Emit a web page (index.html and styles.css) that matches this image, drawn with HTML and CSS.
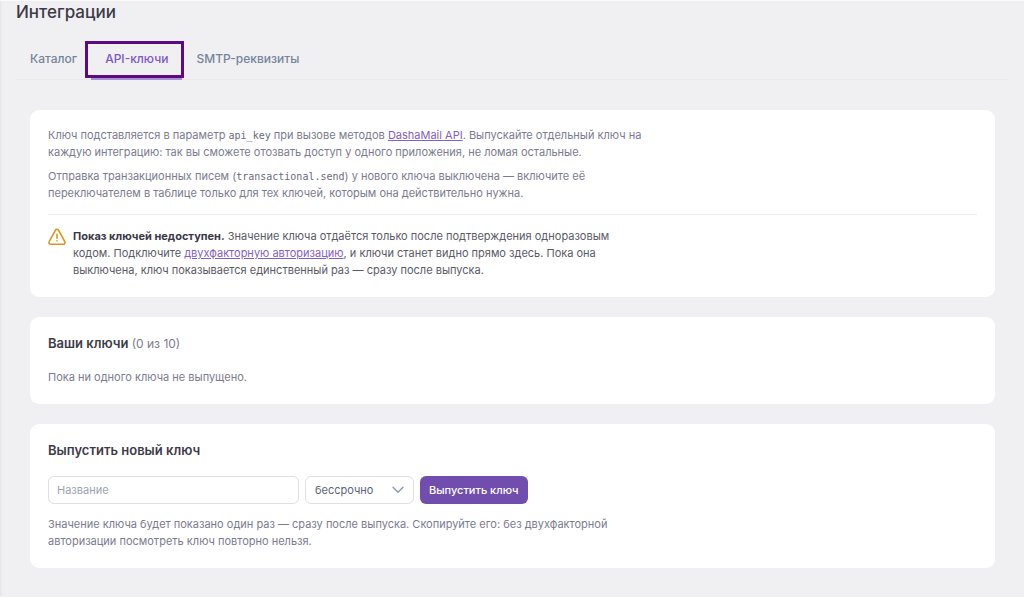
FILE: index.html
```html
<!DOCTYPE html>
<html lang="ru">
<head>
    <meta charset="UTF-8">
    <meta name="viewport" content="width=device-width, initial-scale=1.0">
    <title>Интеграции</title>
    <link rel="stylesheet" href="styles.css">
</head>
<body>
    <main class="page">
        <h1>Интеграции</h1>

        <nav class="tabs">
            <a class="tab" href="#catalog">Каталог</a>
            <a class="tab active" href="#api">API-ключи</a>
            <a class="tab" href="#smtp">SMTP-реквизиты</a>
        </nav>

        <div class="cards">
            <section class="card">
                <div class="intro">
                    <p>Ключ подставляется в параметр <code>api_key</code> при вызове методов <a href="#docs">DashaMail API</a>. Выпускайте отдельный ключ на каждую интеграцию: так вы сможете отозвать доступ у одного приложения, не ломая остальные.</p>
                    <p>Отправка транзакционных писем (<code>transactional.send</code>) у нового ключа выключена — включите её переключателем в таблице только для тех ключей, которым она действительно нужна.</p>
                </div>
                <div class="notice">
                    <svg class="notice-icon" viewBox="0 0 18 18" fill="none" stroke="#d9951f" stroke-width="1.6" stroke-linecap="round" stroke-linejoin="round">
                        <path d="M7.5 2.1 1.2 13.6a1.7 1.7 0 0 0 1.5 2.6h12.6a1.7 1.7 0 0 0 1.5-2.6L10.5 2.1a1.7 1.7 0 0 0-3 0z"/>
                        <path d="M9 6.2v4M9 12.9v.1"/>
                    </svg>
                    <p><strong>Показ ключей недоступен.</strong> Значение ключа отдаётся только после подтверждения одноразовым кодом. Подключите <a href="#2fa">двухфакторную авторизацию</a>, и ключи станет видно прямо здесь. Пока она выключена, ключ показывается единственный раз — сразу после выпуска.</p>
                </div>
            </section>

            <section class="card">
                <h2>Ваши ключи <span class="count">(0 из 10)</span></h2>
                <p class="hint">Пока ни одного ключа не выпущено.</p>
            </section>

            <section class="card">
                <h2>Выпустить новый ключ</h2>
                <form class="key-form">
                    <input type="text" id="keyName" placeholder="Название" aria-label="Название">
                    <div class="select-wrap">
                        <select id="keyTerm" aria-label="Срок действия">
                            <option>бессрочно</option>
                        </select>
                        <svg class="chevron" viewBox="0 0 12 8" fill="none" stroke="#8496ad" stroke-width="1.3" stroke-linecap="round" stroke-linejoin="round">
                            <path d="M1 1.2l5 5 5-5"/>
                        </svg>
                    </div>
                    <button type="button">Выпустить ключ</button>
                </form>
                <p class="hint">Значение ключа будет показано один раз — сразу после выпуска. Скопируйте его: без двухфакторной авторизации посмотреть ключ повторно нельзя.</p>
            </section>
        </div>
    </main>
</body>
</html>
```
FILE: styles.css
```css
* {
    margin: 0;
    padding: 0;
    box-sizing: border-box;
}

body {
    background: #f0f0f3;
    border-top: 1px solid #fafafb;
    font-family: Inter, "Liberation Sans", sans-serif;
    font-size: 11px;
    line-height: 17px;
    color: #7b7b8f;
}

.page {
    padding: 0 15px 28px 16px;
    box-shadow: inset 2px 0 2px -1px #e4e4e8;
}

h1 {
    font-size: 17px;
    font-weight: 500;
    line-height: 22px;
    color: #3d3b48;
}

.tabs {
    display: flex;
    margin-top: 16px;
    border-bottom: 1px solid #e9e9ed;
}

.tab {
    position: relative;
    padding: 11px 14px 10px;
    margin-bottom: -1px;
    border-bottom: 2px solid transparent;
    font-size: 12px;
    font-weight: 500;
    line-height: 18px;
    color: #748499;
    text-decoration: none;
}

.tab.active {
    color: #7f57c2;
    border-bottom-color: #a98fd3;
}

/* frame around the current tab */
.tab.active::after {
    content: "";
    position: absolute;
    inset: 2px -2px 0 -6px;
    border: 3px solid #5c0a82;
}

.cards {
    display: flex;
    flex-direction: column;
    gap: 20px;
    padding: 30px 14px 0;
}

.card {
    padding: 17px 18px 18px;
    background: #fff;
    border-radius: 9px;
}

.card a {
    color: #8460c4;
    text-decoration: underline;
}

.intro {
    display: flex;
    flex-direction: column;
    gap: 7px;
    padding-bottom: 12px;
    border-bottom: 1px solid #ededf0;
}

.intro p {
    max-width: 600px;
}

code {
    font-family: "DejaVu Sans Mono", monospace;
    font-size: 10px;
    line-height: 1;
    color: #6a6a7c;
}

.notice {
    display: flex;
    gap: 7px;
    padding-top: 13px;
    color: #5a5a66;
}

.notice p {
    max-width: 540px;
}

.notice strong {
    font-weight: 700;
    color: #3a3845;
}

.notice-icon {
    flex: none;
    width: 18px;
    height: 18px;
}

h2 {
    margin-bottom: 16px;
    font-size: 13px;
    font-weight: 600;
    line-height: 19px;
    color: #3d3b48;
}

.count {
    font-weight: 400;
    font-size: 12px;
    color: #7b7b8f;
}

.hint {
    max-width: 580px;
}

.key-form {
    display: flex;
    gap: 6px;
    margin-bottom: 12px;
}

.key-form input,
.key-form select,
.key-form button {
    height: 28px;
    border: 1px solid #dfdfe5;
    border-radius: 6px;
    background: #fff;
    font-family: inherit;
    font-size: 11px;
}

.key-form input {
    width: 251px;
    padding: 0 8px;
}

.key-form input::placeholder {
    color: #9aa3b2;
}

.select-wrap {
    position: relative;
}

.key-form select {
    width: 109px;
    padding: 0 9px;
    appearance: none;
    color: #5a6577;
}

.chevron {
    position: absolute;
    top: 10px;
    right: 10px;
    width: 12px;
    height: 8px;
    pointer-events: none;
}

.key-form button {
    padding: 0 9px;
    border: none;
    background: #714eae;
    color: #fff;
    font-weight: 500;
    cursor: pointer;
}
```
